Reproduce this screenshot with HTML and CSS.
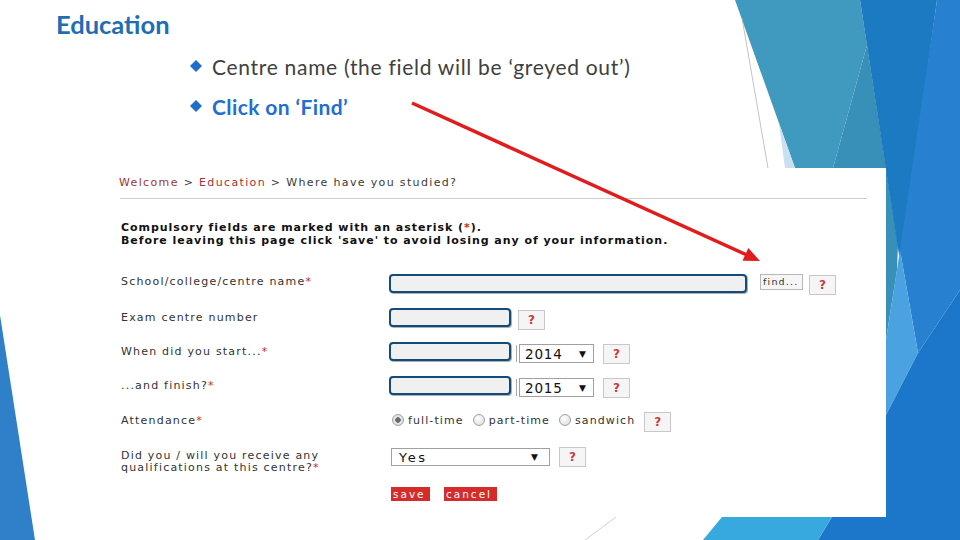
FILE: index.html
```html
<!DOCTYPE html>
<html>
<head>
<meta charset="utf-8">
<link rel="stylesheet" href="styles.css">
</head>
<body>
<div class="slide">
  <svg class="decor" width="960" height="540" viewBox="0 0 960 540">
    <polygon points="0,315 35,540 0,540" fill="#2f80c9"/>
    <polygon points="735,0 860,0 867,45 833,168 795,168" fill="#409abf"/>
    <polygon points="867,45 898,245 897,270 886,340 886,168 833,168" fill="#3890b8"/>
    <polygon points="779,124 795,168 785,168" fill="#c9e0f0"/>
    <line x1="742" y1="18" x2="768" y2="168" stroke="#b4b4b4" stroke-width="0.8"/>
    <polygon points="860,0 937,0 902,255 899,255" fill="#1c7ac3"/>
    <polygon points="937,0 960,0 960,290 918,353 900,250" fill="#2781d0"/>
    <polygon points="900,250 918,353 886,415 886,340" fill="#4aa2e0"/>
    <polygon points="960,290 960,540 818,540 832,517 886,517 886,415 918,353" fill="#1c76ca"/>
    <polygon points="722,517 832,517 818,540 703,540" fill="#38a9de"/>
    <line x1="585" y1="540" x2="620" y2="514" stroke="#c4c4c4" stroke-width="0.8"/>
  </svg>

  <div class="content">
    <header class="top">
      <h1 class="title">Education</h1>
      <ul class="bullets">
        <li class="bullet"><svg class="diamond" width="12" height="12" viewBox="0 0 12 12"><polygon points="6,0 12,6 6,12 0,6" fill="#1f6fc8"/></svg><span>Centre name (the field will be ‘greyed out’)</span></li>
        <li class="bullet strong"><svg class="diamond" width="12" height="12" viewBox="0 0 12 12"><polygon points="6,0 12,6 6,12 0,6" fill="#1f6fc8"/></svg><span>Click on ‘Find’</span></li>
      </ul>
    </header>

    <section class="form">
      <div class="crumbs"><span class="crumb-link">Welcome</span> &gt; <span class="crumb-link">Education</span> &gt; Where have you studied?</div>
      <div class="rule"></div>
      <p class="notice">Compulsory fields are marked with an asterisk (<span class="req">*</span>).<br>Before leaving this page click 'save' to avoid losing any of your information.</p>

      <div class="grid">
        <div class="label r1">School/college/centre name<span class="req">*</span></div>
        <div class="controls r1">
          <div class="input wide"></div>
          <div class="find">find...</div>
          <div class="help h-r1">?</div>
        </div>

        <div class="label r2">Exam centre number</div>
        <div class="controls r2">
          <div class="input"></div>
          <div class="help h-r2">?</div>
        </div>

        <div class="label r3">When did you start...<span class="req">*</span></div>
        <div class="controls r3">
          <div class="input"></div>
          <div class="select year"><span>2014</span><span class="caret">▼</span></div>
          <div class="help h-sel">?</div>
        </div>

        <div class="label r4">...and finish?<span class="req">*</span></div>
        <div class="controls r4">
          <div class="input"></div>
          <div class="select year"><span>2015</span><span class="caret">▼</span></div>
          <div class="help h-sel">?</div>
        </div>

        <div class="label r5">Attendance<span class="req">*</span></div>
        <div class="controls r5">
          <div class="radios">
            <span class="radio checked"></span><span class="rlabel">full-time</span>
            <span class="radio"></span><span class="rlabel">part-time</span>
            <span class="radio"></span><span class="rlabel last">sandwich</span>
          </div>
          <div class="help h-r5">?</div>
        </div>

        <div class="label r6">Did you / will you receive any<br>qualifications at this centre?<span class="req">*</span></div>
        <div class="controls r6">
          <div class="select yes"><span>Yes</span><span class="caret">▼</span></div>
          <div class="help h-r6">?</div>
        </div>

        <div class="label r7"></div>
        <div class="controls r7">
          <div class="btn">save</div>
          <div class="btn cancel">cancel</div>
        </div>
      </div>
    </section>
  </div>

  <svg class="arrow" width="960" height="540" viewBox="0 0 960 540">
    <line x1="412" y1="103" x2="747" y2="255" stroke="#e21c1c" stroke-width="3.5"/>
    <polygon points="760,261 742.5,260.8 748.3,248" fill="#e21c1c"/>
  </svg>
</div>
</body>
</html>
```

FILE: styles.css
```css
html, body {
  margin: 0;
  padding: 0;
}
body {
  background: #ffffff;
}
.slide {
  position: relative;
  width: 960px;
  height: 540px;
  overflow: hidden;
  background: #ffffff;
  font-family: "DejaVu Sans", sans-serif;
}
.decor {
  position: absolute;
  left: 0;
  top: 0;
  z-index: 0;
}
.arrow {
  position: absolute;
  left: 0;
  top: 0;
  z-index: 2;
  pointer-events: none;
}
.content {
  position: relative;
  z-index: 1;
}
.top {
  height: 168px;
  box-sizing: border-box;
  padding-top: 9px;
}
.title {
  margin: 0;
  padding-left: 56px;
  font-family: Lato, "Open Sans", sans-serif;
  font-weight: 700;
  font-size: 25.5px;
  line-height: 30px;
  color: #1f6db5;
}
.bullets {
  list-style: none;
  margin: 13px 0 0 0;
  padding: 0 0 0 190px;
}
.bullet {
  display: flex;
  align-items: center;
  gap: 10px;
  height: 28px;
  margin-bottom: 12px;
  font-family: Lato, "Open Sans", sans-serif;
  font-size: 21px;
  letter-spacing: 0.7px;
  color: #404040;
}
.bullet.strong {
  font-weight: 700;
  letter-spacing: 0.4px;
  color: #1f6fcf;
}
.diamond {
  flex: none;
}

.form {
  margin-left: 100px;
  width: 786px;
  height: 349px;
  box-sizing: border-box;
  background: #ffffff;
  padding: 8px 0 0 19px;
  color: #333333;
}
.crumbs {
  font-size: 11px;
  line-height: 14px;
  letter-spacing: 1.35px;
  color: #3a3a3a;
}
.crumb-link {
  color: #a13434;
}
.rule {
  margin: 8px 0 0 1px;
  width: 747px;
  height: 1px;
  background: #cfcfcf;
}
.notice {
  margin: 22px 0 0 2px;
  font-size: 11px;
  font-weight: 700;
  line-height: 13px;
  letter-spacing: 0.95px;
  color: #111111;
}
.req {
  color: #c42a2a;
}

.grid {
  display: grid;
  grid-template-columns: 270px auto;
  grid-template-rows: 34px 34px 34px 36px 36px 39px 20px;
  margin-top: 27px;
}
.label {
  padding: 0 0 0 2px;
  font-size: 11px;
  line-height: 13px;
  letter-spacing: 1.2px;
  color: #333333;
}
.label.r1 {
  padding-top: 1px;
}
.label.r2, .label.r3, .label.r4 {
  padding-top: 3px;
}
.label.r5 {
  padding-top: 2px;
}
.label.r6 {
  padding-top: 2px;
  line-height: 12px;
}
.controls {
  display: flex;
  align-items: flex-start;
}
.input {
  width: 122px;
  height: 19px;
  box-sizing: border-box;
  border: 2.5px solid #134b7b;
  border-radius: 4px;
  background: #f0f0f0;
  box-shadow: 1px 1px 0 #b0b0b0;
}
.input.wide {
  width: 358px;
}
.find {
  margin-left: 13px;
  width: 43px;
  height: 16px;
  box-sizing: border-box;
  border: 1px solid #b8b8b8;
  background: #f6f6f6;
  font-size: 9.5px;
  line-height: 14px;
  letter-spacing: 1.2px;
  padding-left: 2px;
  color: #333333;
}
.help {
  width: 27px;
  height: 20px;
  box-sizing: border-box;
  border: 1px solid #c8c8c8;
  background: #f5f5f5;
  color: #c83b3b;
  font-weight: 700;
  font-size: 12px;
  line-height: 18px;
  text-align: center;
}
.h-r1 { margin-left: 6px; margin-top: 1px; }
.h-r2 { margin-left: 7px; margin-top: 2px; }
.h-sel { margin-left: 9px; margin-top: 2px; }
.h-r5 { margin-left: 9px; }
.h-r6 { margin-left: 9px; margin-top: -1px; }

.select {
  display: flex;
  align-items: center;
  justify-content: space-between;
  box-sizing: border-box;
  border: 1px solid #a0a0a0;
  background: #ffffff;
  color: #111111;
}
.select.year {
  margin-left: 8px;
  margin-top: 2px;
  width: 75px;
  height: 19px;
  padding: 0 7px 0 5px;
  font-size: 13.5px;
  letter-spacing: 0.8px;
  box-shadow: -3px 0 0 -1px #ffffff, -4px 0 0 -1px #a8a8a8;
}
.select.yes {
  margin-left: 2px;
  width: 159px;
  height: 18px;
  padding: 0 11px 0 7px;
  font-size: 13px;
  letter-spacing: 2.5px;
}
.caret {
  font-size: 9px;
  letter-spacing: 0;
}

.radios {
  display: flex;
  align-items: center;
  height: 14px;
  margin-top: 1px;
  padding-left: 3px;
  font-size: 11px;
  letter-spacing: 1.1px;
  color: #333333;
}
.radio {
  width: 12px;
  height: 12px;
  box-sizing: border-box;
  border: 1px solid #a0a0a0;
  border-radius: 50%;
  background: radial-gradient(circle at 40% 35%, #ffffff 0%, #e4e4e4 70%, #cfcfcf 100%);
  margin-right: 4px;
}
.radio.checked {
  background: radial-gradient(circle, #6b6b6b 0, #6b6b6b 2.5px, #e8e8e8 3px, #d8d8d8 100%);
}
.rlabel {
  margin-right: 9px;
}
.rlabel.last {
  margin-right: 0;
}

.r7.controls {
  gap: 14px;
  padding-left: 2px;
}
.btn {
  width: 39px;
  height: 14px;
  box-sizing: border-box;
  background: #d42b2b;
  color: #ffffff;
  font-size: 10.5px;
  line-height: 14px;
  letter-spacing: 2px;
  padding-left: 2px;
}
.btn.cancel {
  width: 53px;
}
```
